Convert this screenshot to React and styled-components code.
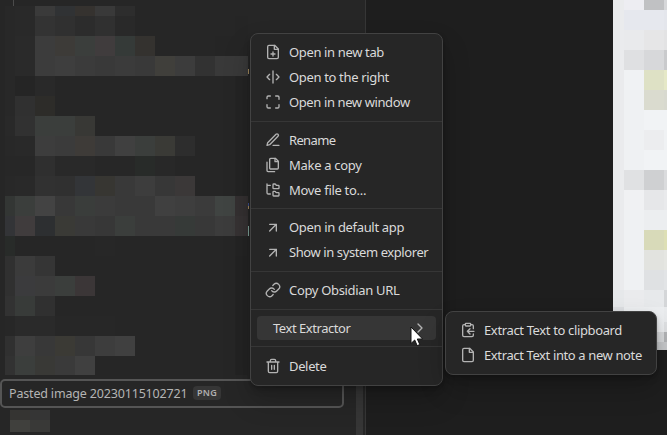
import React from 'react';
import styled, { createGlobalStyle } from 'styled-components';
import { Link, ChevronRight } from 'lucide-react';

const Global = createGlobalStyle`
  html, body { margin: 0; background: #1e1e1e; overflow: hidden; }
  * { box-sizing: border-box; }
`;

const Screen = styled.div`
  position: relative;
  display: flex;
  width: 667px;
  height: 435px;
  overflow: hidden;
  background: #1e1e1e;
  font-family: 'Noto Sans', sans-serif;
`;

const Sidebar = styled.aside`
  display: flex;
  flex: none;
  width: 366px;
  height: 435px;
  background: #262626;
  border-right: 1px solid #363636;
`;

const FileList = styled.div`
  display: flex;
  flex-direction: column;
  flex: none;
  width: 356px;
`;

const Scrollbar = styled.div`
  width: 7px;
  height: 135px;
  align-self: flex-end;
  background: #363636;
`;

const TopGuide = styled.div`
  width: 14px;
  height: 6px;
  flex: none;
  border-right: 1px solid #4b4b4b;
`;

const Mosaic = styled.div`
  display: grid;
  flex: none;
  grid-template-columns: ${(p) => p.$columns};
  grid-template-rows: ${(p) => p.$rows};
  margin: ${(p) => p.$margin || 0};
`;

const Tile = styled.span`
  background: ${(p) => p.$color};
`;

const Rename = styled.div`
  display: flex;
  align-items: center;
  flex: none;
  width: 344px;
  height: 29px;
  margin-top: 4px;
  padding: 0 0 1px 7px;
  border: 2px solid #555;
  border-radius: 5px;
  color: #b4b4b4;
  font-size: 12.5px;
`;

const FileName = styled.span`
  width: 184px;
  white-space: nowrap;
  letter-spacing: -0.17px;
`;

const Tag = styled.span`
  width: 28px;
  height: 14px;
  border-radius: 4px;
  background: #363636;
  color: #b0b0b0;
  font-size: 9px;
  font-weight: 600;
  line-height: 14px;
  letter-spacing: 0.3px;
  text-align: center;
`;

const Workspace = styled.main`
  display: flex;
  flex: 1;
  justify-content: flex-end;
  align-items: flex-start;
`;

const Speck = styled.span`
  position: absolute;
  left: 248px;
  top: ${(p) => p.$y}px;
  width: 1px;
  height: ${(p) => p.$h}px;
  background: ${(p) => p.$color};
`;

const Menu = styled.div`
  position: absolute;
  left: ${(p) => p.$x}px;
  top: ${(p) => p.$y}px;
  width: ${(p) => p.$w}px;
  height: ${(p) => p.$h}px;
  padding: 6px;
  background: #262626;
  border: 1px solid #424242;
  border-radius: 8px;
  box-shadow: 0 2px 3px rgba(0, 0, 0, 0.12), 0 4px 7px rgba(0, 0, 0, 0.14),
    0 14px 28px rgba(0, 0, 0, 0.2);
`;

const Item = styled.div`
  display: flex;
  align-items: center;
  gap: 8px;
  height: 24.85px;
  padding: 0 8px;
  border-radius: 4px;
  color: #dadada;
  font-size: 13px;
  background: ${(p) => (p.$active ? '#363636' : 'transparent')};

  svg {
    flex: none;
    color: #b3b3b3;
  }
`;

const Label = styled.span`
  flex: 1;
  padding-left: ${(p) => (p.$indent ? 8 : 0)}px;
  white-space: nowrap;
  letter-spacing: ${(p) => p.$spacing}px;
`;

const Separator = styled.div`
  height: 1px;
  margin: 6px -6px;
  background: #363636;
`;

const Pointer = styled.svg`
  position: absolute;
  left: 409.5px;
  top: 326px;
`;

function Glyph({ children }) {
  return (
    <svg width="16" height="16" viewBox="0 0 24 24" fill="none" stroke="currentColor"
      strokeWidth="2" strokeLinecap="round" strokeLinejoin="round">
      {children}
    </svg>
  );
}

const FilePlus = () => (
  <Glyph>
    <path d="M14.5 2H6a2 2 0 0 0-2 2v16a2 2 0 0 0 2 2h12a2 2 0 0 0 2-2V7.500L14.500 2z" />
    <path d="M14 2v6h6M12 18v-6M9 15h6" />
  </Glyph>
);
const Split = () => (
  <Glyph>
    <path d="M12 3v18M7 8l-4 4 4 4M17 8l4 4-4 4" />
  </Glyph>
);
const Frame = () => (
  <Glyph>
    <path d="M3 7V5a2 2 0 0 1 2-2h3M16 3h3a2 2 0 0 1 2 2v3M21 16v3a2 2 0 0 1-2 2h-3M8 21H5a2 2 0 0 1-2-2v-3" />
  </Glyph>
);
const Pen = () => (
  <Glyph>
    <path d="M12 20h9M16.500 3.500a2.120 2.120 0 0 1 3 3L7 19l-4 1 1-4Z" />
  </Glyph>
);
const Copies = () => (
  <Glyph>
    <path d="M15.500 2H8.600a1.600 1.600 0 0 0-1.600 1.600v12.800A1.600 1.600 0 0 0 8.600 18h9.800a1.600 1.600 0 0 0 1.600-1.600V6.500L15.500 2z" />
    <path d="M15 2v5h5M3 7.600v12.800A1.600 1.600 0 0 0 4.600 22h9.800" />
  </Glyph>
);
const Tree = () => (
  <Glyph>
    <path d="M13 10h7a1 1 0 0 0 1-1V6a1 1 0 0 0-1-1h-2.500a1 1 0 0 1-.8-.4l-.9-1.200A1 1 0 0 0 15 3h-2a1 1 0 0 0-1 1v5a1 1 0 0 0 1 1ZM13 21h7a1 1 0 0 0 1-1v-3a1 1 0 0 0-1-1h-2.880a1 1 0 0 1-.9-.55l-.44-.9a1 1 0 0 0-.9-.55H13a1 1 0 0 0-1 1v5a1 1 0 0 0 1 1ZM3 3v13a2 2 0 0 0 2 2h3M3 5h5" />
  </Glyph>
);
const Arrow = () => (
  <Glyph>
    <path d="M7 18L17 8M7 8h10v10" />
  </Glyph>
);
const Bin = () => (
  <Glyph>
    <path d="M3 6h18M19 6v14a2 2 0 0 1-2 2H7a2 2 0 0 1-2-2V6M8 6V4a2 2 0 0 1 2-2h4a2 2 0 0 1 2 2v2M10 11v6M14 11v6" />
  </Glyph>
);
const Doc = () => (
  <Glyph>
    <path d="M14.500 2H6a2 2 0 0 0-2 2v16a2 2 0 0 0 2 2h12a2 2 0 0 0 2-2V7.500L14.500 2z" />
    <path d="M14 2v6h6" />
  </Glyph>
);
const ClipboardIn = () => (
  <Glyph>
    <rect x="8" y="2" width="8" height="4" rx="1" />
    <path d="M8 4H6a2 2 0 0 0-2 2v14a2 2 0 0 0 2 2h12a2 2 0 0 0 2-2v-2M16 4h2a2 2 0 0 1 2 2v4M21 14H11M15 10l-4 4 4 4" />
  </Glyph>
);
const Chain = () => <Link size={16} />;

const groups = [
  [
    { icon: FilePlus, text: 'Open in new tab', spacing: -0.36 },
    { icon: Split, text: 'Open to the right', spacing: -0.34 },
    { icon: Frame, text: 'Open in new window', spacing: -0.39 },
  ],
  [
    { icon: Pen, text: 'Rename', spacing: -0.65 },
    { icon: Copies, text: 'Make a copy', spacing: -0.3 },
    { icon: Tree, text: 'Move file to...', spacing: -0.3 },
  ],
  [
    { icon: Arrow, text: 'Open in default app', spacing: -0.34 },
    { icon: Arrow, text: 'Show in system explorer', spacing: -0.41 },
  ],
  [{ icon: Chain, text: 'Copy Obsidian URL', spacing: -0.33 }],
  [{ text: 'Text Extractor', active: true, spacing: -0.45 }],
  [{ icon: Bin, text: 'Delete', spacing: -0.35 }],
];

const submenu = [
  { icon: ClipboardIn, text: 'Extract Text to clipboard', spacing: -0.36 },
  { icon: Doc, text: 'Extract Text into a new note', spacing: -0.38 },
];

const listRows = [
  '282828 292929 3a3a3a 303234 35322f 393939 2d2d2d 262626 262626 262626 262626 262626 262626',
  '282828 292929 333333 303030 2c2c2c 303030 292929 262626 262626 262626 262626 262626 252525',
  '282828 2a2a2a 3c3c3c 3d3b38 3b3e3c 403c3d 353a38 34322f 262626 262626 262626 252525 252525',
  '282828 2a2a2a 3c3c3c 3e3e3e 3b3b3b 393939 3b3b3b 393939 403f3b 3c3c3c 323232 393939 393939',
  '282828 252525 292929 262626 262626 262626 262626 262626 262626 262626 262626 262626 242424',
  '282828 303030 2d2c29 262626 262626 262626 262626 262626 262626 262626 262626 262626 242424',
  '292929 313131 3b3e3c 3b3e3c 383835 262626 262626 262626 262626 262626 262626 262626 242424',
  '282828 292929 3d3d3d 3b3b3b 3e3b38 393939 404040 3b3e3c 3a3a36 2d2d2d 262626 262626 242424',
  '272727 272727 2f2f2f 292929 292929 272727 272727 282b29 282828 262626 262626 262626 242424',
  '282828 292929 313131 303030 333538 373632 393939 3d3d3d 373737 3b3838 262626 262626 242424',
  '333634 3b3e3c 434343 383838 3a3d3b 3b3b3b 393939 393939 404040 3e3e3e 3b3b3b 404442 343031',
  '333437 403c3d 2d2f31 3a3a36 393939 373737 3b3e3c 393939 393939 363a38 383838 3c3c3c 363233',
  '282b29 262626 262626 262626 262626 272727 262626 262626 262626 262626 262626 262626 242424',
  '303030 3b3b3b 353535 262626 262626 262626 262626 262626 262626 262626 262626 262626 232323',
  '303030 3b3b3d 3b3b3b 3b3e3c 3b3637 262626 262626 262626 262626 262626 262626 262626 232323',
  '323232 383b39 303030 262626 262626 262626 262626 262626 262626 262626 262626 262626 232323',
  '272727 2a2a2a 2a2a2a 272727 272727 272727 262626 262626 262626 262626 262626 262626 232323',
  '303030 3e3e3e 383838 3b3a35 373737 3d3d3d 404040 262626 262626 262626 262626 262626 232323',
  '323232 3b3e3c 393936 3a3a3a 404040 262626 262626 262626 262626 262626 262626 262626 232323',
];
const tailRows = ['353432 353535', '40403d 393937'];
const imageRows = [
  'eaebed ededf2 c0c1c3 d6d7d9',
  'eaebed e6e8ee e6e8ee e4e6ec',
  'eaebed e9eaec e6e6e7 e3e3e4',
  'eaebed dfe0e2 d7d8da c9cacc',
  'eaebed f0f2f4 dee1c5 e5e8c7',
  'eaebed eff1f3 dadbcf d8d9cf',
  'eaebed eff1f3 f1f3f5 f1f3f5',
  'eaebed eff1f3 ecedef f0f2f4',
  'eaebed eff1f3 f1f3f5 f1f3f5',
  'eaebed e0e1e3 cfd0d2 dadbdd',
  'eaebed f0f1f3 e6e7e9 e9eaec',
  'eaebed eff1f3 eceef0 eceef0',
  'eaebed eff1f3 d8dab9 dddfb5',
  'eaebed eff1f3 e2e3df e5e6e2',
  'eaebed eff1f3 dfe1e3 e2e4e6',
  'e6e8ea eaebed e7e9eb d4d6d8',
  'dddfe2 eceef0 eceef0 e9ebed',
  'e5e7e9 eceef0 eceef0 dfe1e3',
  'e5e7e9 d8dadc d8dadc b3b5b7',
  'e5e7e9 c8cacc c8cacc c8cacc',
];

function Tiles({ rows, ...grid }) {
  return (
    <Mosaic {...grid}>
      {rows.flatMap((row, y) =>
        row.split(' ').map((color, x) => <Tile key={`${x}-${y}`} $color={`#${color}`} />)
      )}
    </Mosaic>
  );
}

function Entry({ icon: Icon, text, active, spacing }) {
  return (
    <Item $active={active}>
      {Icon && <Icon />}
      <Label $indent={active} $spacing={spacing}>{text}</Label>
      {active && <ChevronRight size={16} />}
    </Item>
  );
}

export default function App() {
  return (
    <>
      <Global />
      <Screen>
        <Sidebar>
          <FileList>
            <TopGuide />
            <Tiles rows={listRows} $columns="10px repeat(11, 20px) 13px"
              $rows="10px repeat(17, 20px) 19px" $margin="0 0 0 5px" />
            <Rename>
              <FileName>Pasted image 20230115102721</FileName>
              <Tag>PNG</Tag>
            </Rename>
            <Tiles rows={tailRows} $columns="20px 20px" $rows="10px 12px" $margin="2px 0 0 10px" />
          </FileList>
          <Scrollbar />
        </Sidebar>
        <Workspace>
          <Tiles rows={imageRows} $columns="11px 20px 20px 3px"
            $rows="10px repeat(14, 20px) 17px 15px 10px 10px 8px" />
        </Workspace>
        <Speck $y={69} $h={5} $color="#a3895f" />
        <Speck $y={203} $h={3} $color="#3c4f8c" />
        <Speck $y={206} $h={3} $color="#a3895f" />
        <Speck $y={226} $h={10} $color="#7fa39a" />
        <Menu $x={250} $y={33} $w={193} $h={353}>
          {groups.map((items, i) => (
            <React.Fragment key={items[0].text}>
              {i > 0 && <Separator />}
              {items.map((item) => <Entry key={item.text} {...item} />)}
            </React.Fragment>
          ))}
        </Menu>
        <Menu $x={445} $y={311} $w={212} $h={64}>
          {submenu.map((item) => <Entry key={item.text} {...item} />)}
        </Menu>
        <Pointer width="14" height="21" viewBox="0 0 14 21">
          <path d="M1 1V17.500L4.700 14L7.200 19.700L9.800 18.500L7.300 13H12.600Z" fill="#fff" stroke="#111" strokeWidth="1" />
        </Pointer>
      </Screen>
    </>
  );
}
